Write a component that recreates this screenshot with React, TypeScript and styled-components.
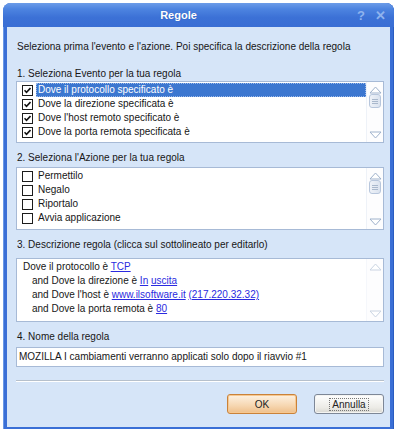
import React from "react";
import styled, { createGlobalStyle } from "styled-components";

const Global = createGlobalStyle`
  html, body { margin: 0; padding: 0; background: #ffffff; }
  body { font-family: "Liberation Sans", Arial, sans-serif; }
`;

const Page = styled.div`
  padding: 3px 0 0 3px;
  width: 400px;
  height: 429px;
  box-sizing: border-box;
`;

const Window = styled.div`
  width: 391px;
  border-radius: 8px 8px 0 0;
  background: #3a6fd6;
  padding: 0 4px 4px 4px;
  box-sizing: border-box;
  box-shadow: inset 1px 0 0 #6a98e6, inset -1px 0 0 #2a5cc0;
`;

const TitleBar = styled.div`
  height: 24px;
  display: flex;
  align-items: center;
  position: relative;
  margin: 0 -4px;
  border-radius: 8px 8px 0 0;
  background: linear-gradient(#6c9ce8 0%, #4d84e0 25%, #3c71d6 60%, #3a6ed4 100%);
`;

const Title = styled.div`
  flex: 1;
  text-align: center;
  color: #ffffff;
  font-weight: bold;
  font-size: 11px;
  padding-right: 40px;
  text-shadow: 0 0 1px #2a58b0;
`;

const TitleButtons = styled.div`
  position: absolute;
  right: 8px;
  top: 5px;
  display: flex;
  gap: 10px;
  color: #8fb3ee;
  font-size: 13px;
  font-weight: bold;
`;

const Body = styled.div`
  background: #d6e5f8;
  padding: 13px 6px 13px 9px;
  display: flex;
  flex-direction: column;
  font-size: 10px;
  color: #161616;
`;

const Text = styled.div<{ $mt?: number }>`
  line-height: 14px;
  margin-top: ${(p) => p.$mt ?? 0}px;
  padding-left: 1px;
  white-space: nowrap;
`;

const Box = styled.div<{ $h: number; $mt?: number }>`
  margin-top: ${(p) => p.$mt ?? 0}px;
  height: ${(p) => p.$h}px;
  background: #ffffff;
  border: 1px solid #a7bad6;
  display: flex;
  box-sizing: border-box;
`;

const ListArea = styled.div`
  flex: 1;
  padding: 1px 0 0 5px;
  display: flex;
  flex-direction: column;
`;

const Row = styled.div`
  height: 14px;
  display: flex;
  align-items: center;
  gap: 5px;
  white-space: nowrap;
`;

const Check = styled.span`
  width: 9px;
  height: 9px;
  border: 1px solid #1c1c1c;
  background: #fff;
  display: flex;
  align-items: center;
  justify-content: center;
  flex: none;
`;

const RowLabel = styled.span<{ $sel?: boolean }>`
  flex: 1;
  height: 14px;
  line-height: 14px;
  padding-left: 2px;
  margin-left: -2px;
  color: ${(p) => (p.$sel ? "#ffffff" : "#161616")};
  background: ${(p) => (p.$sel ? "#3c77d0" : "transparent")};
  outline: ${(p) => (p.$sel ? "1px dotted #9ab8e8" : "none")};
  outline-offset: -1px;
`;

const Scroll = styled.div<{ $disabled?: boolean }>`
  width: 17px;
  flex: none;
  background: #fdfdfe;
  border-left: 1px solid #eef2f8;
  display: flex;
  flex-direction: column;
  align-items: center;
  justify-content: space-between;
  padding: 4px 0 3px;
  box-sizing: border-box;
  opacity: ${(p) => (p.$disabled ? 0.55 : 1)};
`;

const Thumb = styled.div`
  width: 12px;
  height: 14px;
  border: 1px solid #b7c6dc;
  border-radius: 3px;
  background: linear-gradient(90deg, #eef2f8, #dbe3ef);
  box-sizing: border-box;
  display: flex;
  align-items: center;
  justify-content: center;
`;

const Spacer = styled.div`
  flex: 1;
`;

const DescArea = styled.div`
  flex: 1;
  padding: 1px 0 0 6px;
  line-height: 14px;
  white-space: nowrap;
`;

const Indent = styled.div`
  padding-left: 9px;
`;

const Link = styled.span`
  color: #2a2ae0;
  text-decoration: underline;
`;

const Input = styled.div`
  margin-top: 3px;
  height: 20px;
  background: #fff;
  border: 1px solid #a7bad6;
  box-sizing: border-box;
  padding-left: 2px;
  line-height: 18px;
  white-space: nowrap;
`;

const Separator = styled.div`
  margin-top: 13px;
  height: 0;
  border-top: 1px solid #b6c0cc;
  border-bottom: 1px solid #ffffff;
`;

const ButtonRow = styled.div`
  margin-top: 12px;
  display: flex;
  justify-content: flex-end;
  gap: 17px;
`;

const Button = styled.div<{ $default?: boolean }>`
  width: 70px;
  height: 20px;
  box-sizing: border-box;
  border-radius: 3px;
  display: flex;
  align-items: center;
  justify-content: center;
  font-size: 10px;
  color: #222;
  border: 1px solid ${(p) => (p.$default ? "#c9823a" : "#7d8797")};
  background: ${(p) =>
    p.$default
      ? "linear-gradient(#fdf1e2, #f6d6b0 60%, #eebf8a)"
      : "linear-gradient(#ffffff, #ecebe6 70%, #d9d8d2)"};
  box-shadow: ${(p) =>
    p.$default ? "inset 0 0 0 1px #f7c890" : "inset 0 0 0 1px #f4f4f2"};
`;

const ButtonText = styled.span<{ $dotted?: boolean }>`
  padding: 0 2px;
  outline: ${(p) => (p.$dotted ? "1px dotted #777" : "none")};
`;

const CheckMark = () => (
  <svg width="7" height="7" viewBox="0 0 7 7">
    <path d="M0.5 3.2 L2.5 5.3 L6.5 1" fill="none" stroke="#111" strokeWidth="1.6" />
  </svg>
);

const UpArrow = () => (
  <svg width="13" height="8" viewBox="0 0 13 8">
    <path d="M1 7 L6.5 1 L12 7 Z" fill="#fff" stroke="#9fb2cc" strokeWidth="1" />
  </svg>
);

const DownArrow = () => (
  <svg width="13" height="8" viewBox="0 0 13 8">
    <path d="M1 1 L6.5 7 L12 1 Z" fill="#fff" stroke="#9fb2cc" strokeWidth="1" />
  </svg>
);

const Grip = () => (
  <svg width="6" height="5" viewBox="0 0 6 5">
    <path d="M0 0.5 H6 M0 2.5 H6 M0 4.5 H6" stroke="#a9b8cc" strokeWidth="1" />
  </svg>
);

const ScrollBar: React.FC<{ thumb?: boolean; disabled?: boolean }> = ({ thumb, disabled }) => (
  <Scroll $disabled={disabled}>
    <UpArrow />
    {thumb ? (
      <>
        <Thumb>
          <Grip />
        </Thumb>
        <Spacer />
      </>
    ) : null}
    <DownArrow />
  </Scroll>
);

const events = [
  "Dove il protocollo specificato è",
  "Dove la direzione specificata è",
  "Dove l'host remoto specificato è",
  "Dove la porta remota specificata è",
];
const actions = ["Permettilo", "Negalo", "Riportalo", "Avvia applicazione"];

export default function App() {
  return (
    <>
      <Global />
      <Page>
        <Window>
          <TitleBar>
            <Title>Regole</Title>
            <TitleButtons>
              <span>?</span>
              <span>✕</span>
            </TitleButtons>
          </TitleBar>
          <Body>
            <Text>Seleziona prima l'evento e l'azione. Poi specifica la descrizione della regola</Text>
            <Text $mt={13}>1. Seleziona Evento per la tua regola</Text>
            <Box $h={62}>
              <ListArea>
                {events.map((e, i) => (
                  <Row key={e}>
                    <Check>
                      <CheckMark />
                    </Check>
                    <RowLabel $sel={i === 0}>{e}</RowLabel>
                  </Row>
                ))}
              </ListArea>
              <ScrollBar thumb />
            </Box>
            <Text $mt={8}>2. Seleziona l'Azione per la tua regola</Text>
            <Box $h={63} $mt={2}>
              <ListArea>
                {actions.map((a) => (
                  <Row key={a}>
                    <Check />
                    <RowLabel>{a}</RowLabel>
                  </Row>
                ))}
              </ListArea>
              <ScrollBar thumb />
            </Box>
            <Text $mt={8}>3. Descrizione regola (clicca sul sottolineato per editarlo)</Text>
            <Box $h={64} $mt={6}>
              <DescArea>
                <div>
                  Dove il protocollo è <Link>TCP</Link>
                </div>
                <Indent>
                  and Dove la direzione è <Link>In</Link> <Link>uscita</Link>
                </Indent>
                <Indent>
                  and Dove l'host è <Link>www.ilsoftware.it</Link> <Link>(217.220.32.32)</Link>
                </Indent>
                <Indent>
                  and Dove la porta remota è <Link>80</Link>
                </Indent>
              </DescArea>
              <ScrollBar disabled />
            </Box>
            <Text $mt={8}>4. Nome della regola</Text>
            <Input>MOZILLA I cambiamenti verranno applicati solo dopo il riavvio #1</Input>
            <Separator />
            <ButtonRow>
              <Button $default>
                <ButtonText>OK</ButtonText>
              </Button>
              <Button>
                <ButtonText $dotted>Annulla</ButtonText>
              </Button>
            </ButtonRow>
          </Body>
        </Window>
      </Page>
    </>
  );
}
